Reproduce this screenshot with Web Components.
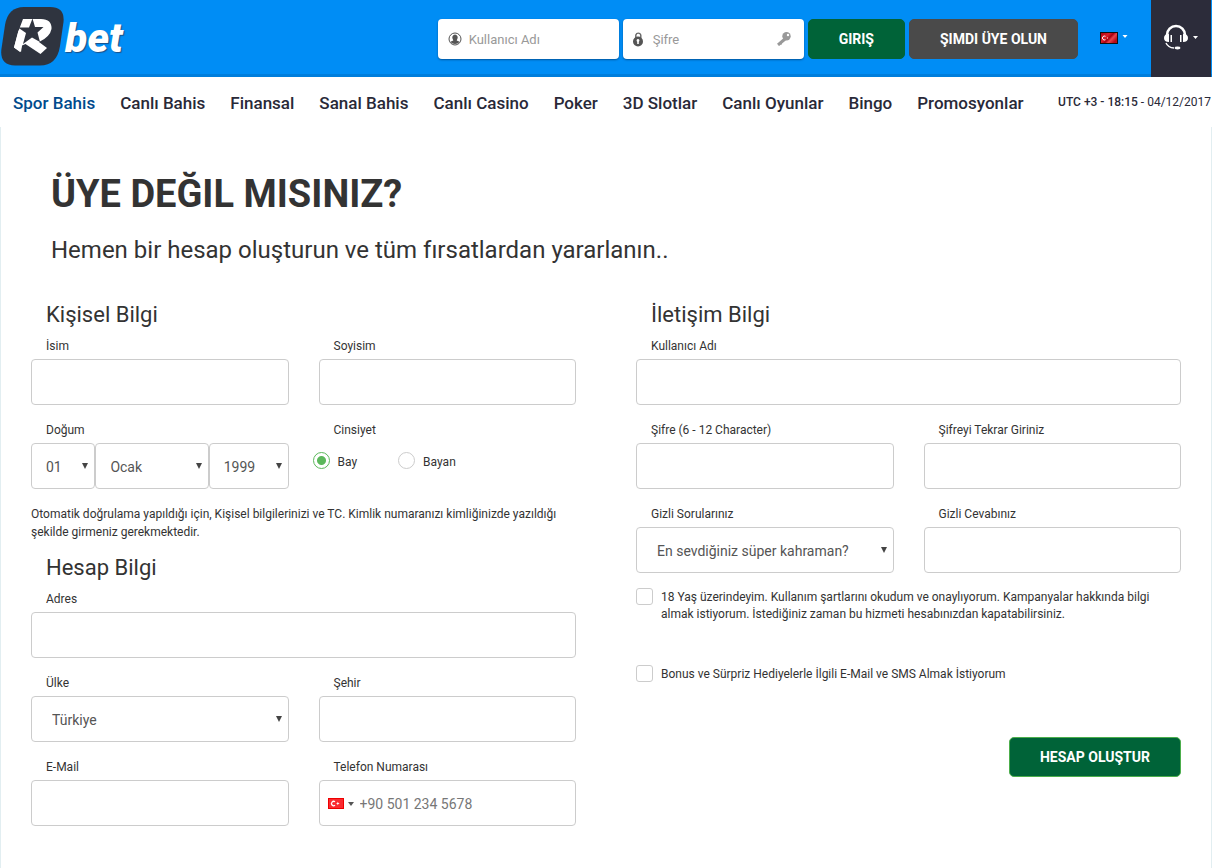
<!DOCTYPE html>
<html lang="tr">
<head>
<meta charset="utf-8">
<meta name="viewport" content="width=device-width, initial-scale=1">
<title>Rbet - Üye Ol</title>
<style>
  body { margin: 0; background: #fff; color: #333; font-family: Roboto, sans-serif; font-size: 12px; }
</style>
</head>
<body>
<site-header></site-header>
<site-nav></site-nav>
<sign-up-page></sign-up-page>

<script>
const define = (name, html, setup) => {
  const template = document.createElement('template');
  template.innerHTML = '<style>*{box-sizing:border-box}:host{display:block}[hidden]{display:none!important}</style>' + html;
  customElements.define(name, class extends HTMLElement {
    constructor() {
      super();
      this.attachShadow({ mode: 'open' }).append(template.content.cloneNode(true));
    }
    connectedCallback() {
      if (setup && !this.ready) { this.ready = true; setup(this, this.shadowRoot); }
    }
  });
};

/* Brand */
define('brand-logo', `
<style>
  a { display: flex; align-items: center; gap: 1px; color: #fff; text-decoration: none; }
  span { font-size: 41px; line-height: 62px; padding-top: 2px; font-weight: 900; font-style: italic; text-shadow: 1px 1px 1px #1b4f86; }
  svg { display: block; }
</style>
<a href="#" aria-label="Rbet">
  <svg width="64" height="74" viewBox="0 0 64 74">
    <path fill="#2f343f" d="M24 7H50Q65 7 63.500 22L60 46Q57 65.500 40 65.500H15Q0 65.500 1.300 50L5 25Q8 7 24 7Z"/>
    <path fill="#fff" d="M23 19H41Q52 19 51.500 29Q50 37 39 42L47 48L40.500 54L25.500 44L22 45.500L21 52L14 47.500L18.500 31Z"/>
    <path fill="#2f343f" d="M18 27.500H29L32.500 18.500L35 27H43.500L37.500 32.500L40 42L32 37.500L23 44L26 33Z"/>
    <path fill="#fff" d="M18.500 30.500L24.500 33.500L22 45L20 52L14 47.500Z"/>
  </svg>
  <span>bet</span>
</a>`);

/* Login box in the header */
define('login-input', `
<style>
  label { display: flex; align-items: center; height: 40px; padding: 0 10px; background: #fff; border-radius: 4px; box-shadow: 0 1px 2px #00559c; }
  input { flex: 1; min-width: 0; margin: 0 0 0 7px; padding: 2px 0 0; border: 0; outline: 0; background: none; font: 13px/18px Roboto, sans-serif; color: #333; }
  input::placeholder { color: #999; opacity: 1; }
</style>
<label><slot name="start"></slot><input><slot name="end"></slot></label>`,
(el, root) => {
  const input = root.querySelector('input');
  input.type = el.getAttribute('type') || 'text';
  input.placeholder = el.getAttribute('placeholder');
  input.setAttribute('aria-label', input.placeholder);
});

define('solid-button', `
<style>
  :host { flex: none; }
  button { display: block; height: 40px; padding: 0 30px; border: 1px solid var(--edge, var(--fill, #006338)); border-radius: 5px; background: var(--fill, #006338); color: #fff; font: 700 14px/20px Roboto, sans-serif; white-space: nowrap; cursor: pointer; }
</style>
<button><slot></slot></button>`,
(el, root) => { root.querySelector('button').type = el.getAttribute('type') || 'button'; });

define('site-header', `
<style>
  header { display: flex; align-items: center; height: 77px; padding-right: 1px; background: #008df5; box-shadow: inset 0 -3px #007edc; }
  brand-logo { margin: 0 auto 3px 0; }
  form { display: flex; gap: 4px; }
  login-input { width: 181px; }
  button { display: flex; align-items: center; justify-content: center; gap: 4px; padding: 0; border: 0; background: none; cursor: pointer; }
  .lang { width: 73px; height: 40px; padding: 0 1px 2px 0; }
  .help { width: 60px; height: 77px; padding: 0 2px 4px 0; background: #2c2c3a; gap: 4px; }
  .dark { --fill: #4a4a4a; }
</style>
<header>
  <brand-logo></brand-logo>
  <form>
    <login-input placeholder="Kullanıcı Adı">
      <svg slot="start" width="14" height="14" viewBox="0 0 14 14"><circle cx="7" cy="7" r="6" fill="none" stroke="#555"/><path fill="#555" d="M7 2.500a2.700 3 0 0 1 2.300 4.500l-.6 1.500 3 1.300A6 6 0 0 1 2.300 9.800l3-1.300-.6-1.500A2.700 3 0 0 1 7 2.500Z"/></svg>
    </login-input>
    <login-input type="password" placeholder="Şifre">
      <svg slot="start" width="13" height="16" viewBox="0 0 13 16"><path d="M2.800 7V4a2.700 3 0 0 1 5 0v3" fill="none" stroke="#666" stroke-width="1.400"/><circle cx="5" cy="10.500" r="5" fill="#555"/><path fill="#fff" d="M5 8a1.500 1.500 0 0 1 .8 2.700V13H4.200v-2.300A1.500 1.500 0 0 1 5 8Z"/></svg>
      <svg slot="end" width="18" height="14" viewBox="0 0 18 14"><path d="M9 7 2 13" stroke="#999" stroke-width="3"/><path d="M5 10.500v2" stroke="#999" stroke-width="2"/><ellipse cx="10.500" cy="4.300" rx="4.200" ry="4.200" fill="#999"/><circle cx="12" cy="3" r="1.200" fill="#fff"/></svg>
    </login-input>
    <solid-button type="submit">GIRIŞ</solid-button>
    <solid-button class="dark">ŞIMDI ÜYE OLUN</solid-button>
  </form>
  <button class="lang" aria-label="Dil">
    <svg width="18" height="12" viewBox="0 0 18 12"><defs><linearGradient id="g" x2="1" y2=".6"><stop offset="0" stop-color="#b0000f"/><stop offset=".4" stop-color="#dc1f2a"/><stop offset=".6" stop-color="#a80010"/><stop offset=".75" stop-color="#e8454c"/><stop offset="1" stop-color="#b80a16"/></linearGradient></defs><rect width="18" height="12" fill="#111"/><rect x="1" y="1" width="16" height="10" fill="url(#g)"/><path d="M5.500 4.300a2 2 0 1 0 0 3.400" fill="none" stroke="#fff"/><circle cx="7.500" cy="6" r=".7" fill="#fbb"/></svg>
    <svg width="6" height="12" viewBox="0 0 6 12"><path fill="#fff" d="M.5 3h5L3 6Z"/></svg>
  </button>
  <button class="help" aria-label="Destek">
    <svg width="26" height="28" viewBox="0 0 26 28"><path d="M4 13V12a9 9 0 0 1 18 0v1" fill="none" stroke="#fff" stroke-width="2.600"/><path d="M6 11v8Q1 19 1 15T6 11ZM20 11v8q5 0 5-4T20 11ZM7.500 12h1.500v7H7.500ZM17 12h1.500v7H17Z" fill="#fff"/><path d="M3 20q2 4.500 8 5" fill="none" stroke="#fff" stroke-width="1.400"/><ellipse cx="14.500" cy="25" rx="3" ry="1.400" fill="#fff"/></svg>
    <svg width="5" height="4" viewBox="0 0 5 4"><path fill="#fff" d="M0 1h5L2.500 4Z"/></svg>
  </button>
</header>`);

define('site-nav', `
<style>
  nav { display: flex; align-items: center; height: 50px; padding: 0 1px 0 13px; }
  ul { display: flex; gap: 25px; margin: 2px auto 0 0; padding: 0; list-style: none; }
  a { font-size: 17px; line-height: 24px; font-weight: 500; color: #292938; text-decoration: none; white-space: nowrap; }
  a[aria-current] { color: #004b8d; }
  time { line-height: 18px; white-space: nowrap; color: #292938; }
  b { font-weight: 500; }
</style>
<nav>
  <ul>
    <li><a href="#" aria-current="page">Spor Bahis</a></li>
    <li><a href="#">Canlı Bahis</a></li>
    <li><a href="#">Finansal</a></li>
    <li><a href="#">Sanal Bahis</a></li>
    <li><a href="#">Canlı Casino</a></li>
    <li><a href="#">Poker</a></li>
    <li><a href="#">3D Slotlar</a></li>
    <li><a href="#">Canlı Oyunlar</a></li>
    <li><a href="#">Bingo</a></li>
    <li><a href="#">Promosyonlar</a></li>
  </ul>
  <time datetime="2017-12-04T18:15+03:00"><b>UTC +3 - 18:15</b> - 04/12/2017</time>
</nav>`);

/* Label above a text box; the start slot lies over the box's left end */
define('text-field', `
<style>
  label { display: block; margin-bottom: 4px; padding-left: 15px; line-height: 18px; }
  .box { display: grid; align-items: center; }
  .box > * { grid-area: 1 / 1; }
  input { width: 100%; height: 46px; margin: 0; padding: 2px 15px 0; border: 1px solid #ccc; border-radius: 4px; background: #fff; color: #555; font: 14px/20px Roboto, sans-serif; }
  :host([type=tel]) input { padding-left: 40px; }
  input::placeholder { color: #777; opacity: 1; }
  slot { display: flex; z-index: 1; justify-self: start; padding-left: 9px; }
</style>
<label for="f"></label>
<div class="box"><input id="f"><slot></slot></div>`,
(el, root) => {
  root.querySelector('label').textContent = el.getAttribute('label');
  const input = root.querySelector('input');
  input.type = el.getAttribute('type') || 'text';
  input.placeholder = el.getAttribute('placeholder') || '';
});

define('select-field', `
<style>
  label { display: block; margin-bottom: 4px; padding-left: 15px; line-height: 18px; }
  .box { display: grid; align-items: center; }
  .box > * { grid-area: 1 / 1; }
  select { appearance: none; width: 100%; height: 46px; margin: 0; padding: 2px 16px 0 var(--inset, 20px); border: 1px solid #ccc; border-radius: 4px; background: #fff; color: #555; font: 14px/20px Roboto, sans-serif; }
  svg { justify-self: end; margin-right: 7px; pointer-events: none; }
</style>
<label for="f"></label>
<div class="box"><select id="f"></select><svg width="6" height="6" viewBox="0 0 6 6"><path fill="#444" d="M0 0h6L3 6Z"/></svg></div>`,
(el, root) => {
  const label = root.querySelector('label'), select = root.querySelector('select');
  if (el.hasAttribute('label')) label.textContent = el.getAttribute('label');
  else { label.remove(); select.setAttribute('aria-label', el.getAttribute('name')); }
  select.add(new Option(el.getAttribute('value')));
});

define('birth-field', `
<style>
  fieldset { margin: 0; padding: 0; border: 0; min-width: 0; }
  legend { display: block; padding: 0 0 4px 15px; line-height: 18px; }
  div { display: grid; grid-template-columns: 25fr 44fr 31fr; --inset: 14px; }
</style>
<fieldset><legend>Doğum</legend>
  <div>
    <select-field name="Gün" value="01"></select-field>
    <select-field name="Ay" value="Ocak"></select-field>
    <select-field name="Yıl" value="1999"></select-field>
  </div>
</fieldset>`);

define('gender-field', `
<style>
  fieldset { margin: 0; padding: 0; border: 0; min-width: 0; }
  legend { display: block; padding: 0 0 4px 15px; line-height: 18px; }
  div { display: flex; gap: 41px; margin: 9px 0 0 -6px; }
  label { display: flex; align-items: start; gap: 8px; line-height: 20px; }
  input { appearance: none; width: 17px; height: 17px; margin: 0; border: 1px solid #ccc; border-radius: 50%; background: #fff; }
  input:checked { border-color: #5cb85c; background: radial-gradient(circle, #5cb85c 4px, #fff 5px); }
</style>
<fieldset><legend>Cinsiyet</legend>
  <div>
    <label><input type="radio" name="gender" checked>Bay</label>
    <label><input type="radio" name="gender">Bayan</label>
  </div>
</fieldset>`);

define('check-field', `
<style>
  label { display: flex; gap: 8px; line-height: 17px; }
  input { appearance: none; flex: none; width: 17px; height: 17px; margin: 0; border: 1px solid #ccc; border-radius: 3px; background: #fff; }
  input:checked { background: #5cb85c; }
  span { padding-top: 1px; }
</style>
<label><input type="checkbox"><span><slot></slot></span></label>`);

define('form-section', `
<style>
  h2 { margin: 0 0 8px; padding: 1px 0 0 15px; font-size: 22px; line-height: 28px; font-weight: 400; }
  div { display: grid; grid-template-columns: 1fr 1fr; gap: 16px 30px; }
  ::slotted(.wide) { grid-column: 1 / -1; }
</style>
<section><h2></h2><div><slot></slot></div></section>`,
(el, root) => { root.querySelector('h2').textContent = el.getAttribute('heading'); });

define('sign-up-page', `
<style>
  main { min-height: calc(100vh - 127px); padding: 44px 0 42px; border: solid #e2eef1; border-width: 0 1px; }
  h1 { margin: 0 50px 18px; font-size: 38px; line-height: 46px; font-weight: 700; }
  .lead { margin: 0 50px 35px; font-size: 24px; line-height: 30px; }
  form { display: grid; grid-template-columns: 1fr 1fr; }
  .column { display: flex; flex-direction: column; gap: 12px; padding: 0 30px; }
  .note { margin: 0; line-height: 18px; }
  .checks { display: grid; gap: 42px; margin: 3px 0 42px; }
  solid-button { align-self: flex-end; --edge: #4cae4c; }
</style>
<main>
  <h1>ÜYE DEĞIL MISINIZ?</h1>
  <p class="lead">Hemen bir hesap oluşturun ve tüm fırsatlardan yararlanın..</p>
  <form>
    <div class="column">
      <form-section heading="Kişisel Bilgi">
        <text-field label="İsim"></text-field>
        <text-field label="Soyisim"></text-field>
        <birth-field></birth-field>
        <gender-field></gender-field>
        <p class="note wide">Otomatik doğrulama yapıldığı için, Kişisel bilgilerinizi ve TC. Kimlik numaranızı kimliğinizde yazıldığı şekilde girmeniz gerekmektedir.</p>
      </form-section>
      <form-section heading="Hesap Bilgi">
        <text-field class="wide" label="Adres"></text-field>
        <select-field label="Ülke" value="Türkiye"></select-field>
        <text-field label="Şehir"></text-field>
        <text-field label="E-Mail" type="email"></text-field>
        <text-field label="Telefon Numarası" type="tel" placeholder="+90 501 234 5678">
          <svg width="27" height="11" viewBox="0 0 27 11"><rect width="16" height="11" fill="#e30a17"/><rect x=".5" y=".5" width="15" height="10" fill="#fa2a30" stroke="#e00"/><path d="M7 3.800a2.200 2.200 0 1 0 0 3.500" fill="none" stroke="#fff" stroke-width="1.300"/><path d="M8 5.500 9.300 5l.5-1.200L10.400 5l1.300.5-1.300.5-.6 1.200L9.300 6Z" fill="#fff"/><path d="M20 4h6l-3 4Z" fill="#555"/></svg>
        </text-field>
      </form-section>
    </div>
    <div class="column">
      <form-section heading="İletişim Bilgi">
        <text-field class="wide" label="Kullanıcı Adı"></text-field>
        <text-field label="Şifre (6 - 12 Character)" type="password"></text-field>
        <text-field label="Şifreyi Tekrar Giriniz" type="password"></text-field>
        <select-field label="Gizli Sorularınız" value="En sevdiğiniz süper kahraman?"></select-field>
        <text-field label="Gizli Cevabınız"></text-field>
      </form-section>
      <div class="checks">
        <check-field>18 Yaş üzerindeyim. Kullanım şartlarını okudum ve onaylıyorum. Kampanyalar hakkında bilgi almak istiyorum. İstediğiniz zaman bu hizmeti hesabınızdan kapatabilirsiniz.</check-field>
        <check-field>Bonus ve Sürpriz Hediyelerle İlgili E-Mail ve SMS Almak İstiyorum</check-field>
      </div>
      <solid-button type="submit">HESAP OLUŞTUR</solid-button>
    </div>
  </form>
</main>`);
</script>
</body>
</html>
